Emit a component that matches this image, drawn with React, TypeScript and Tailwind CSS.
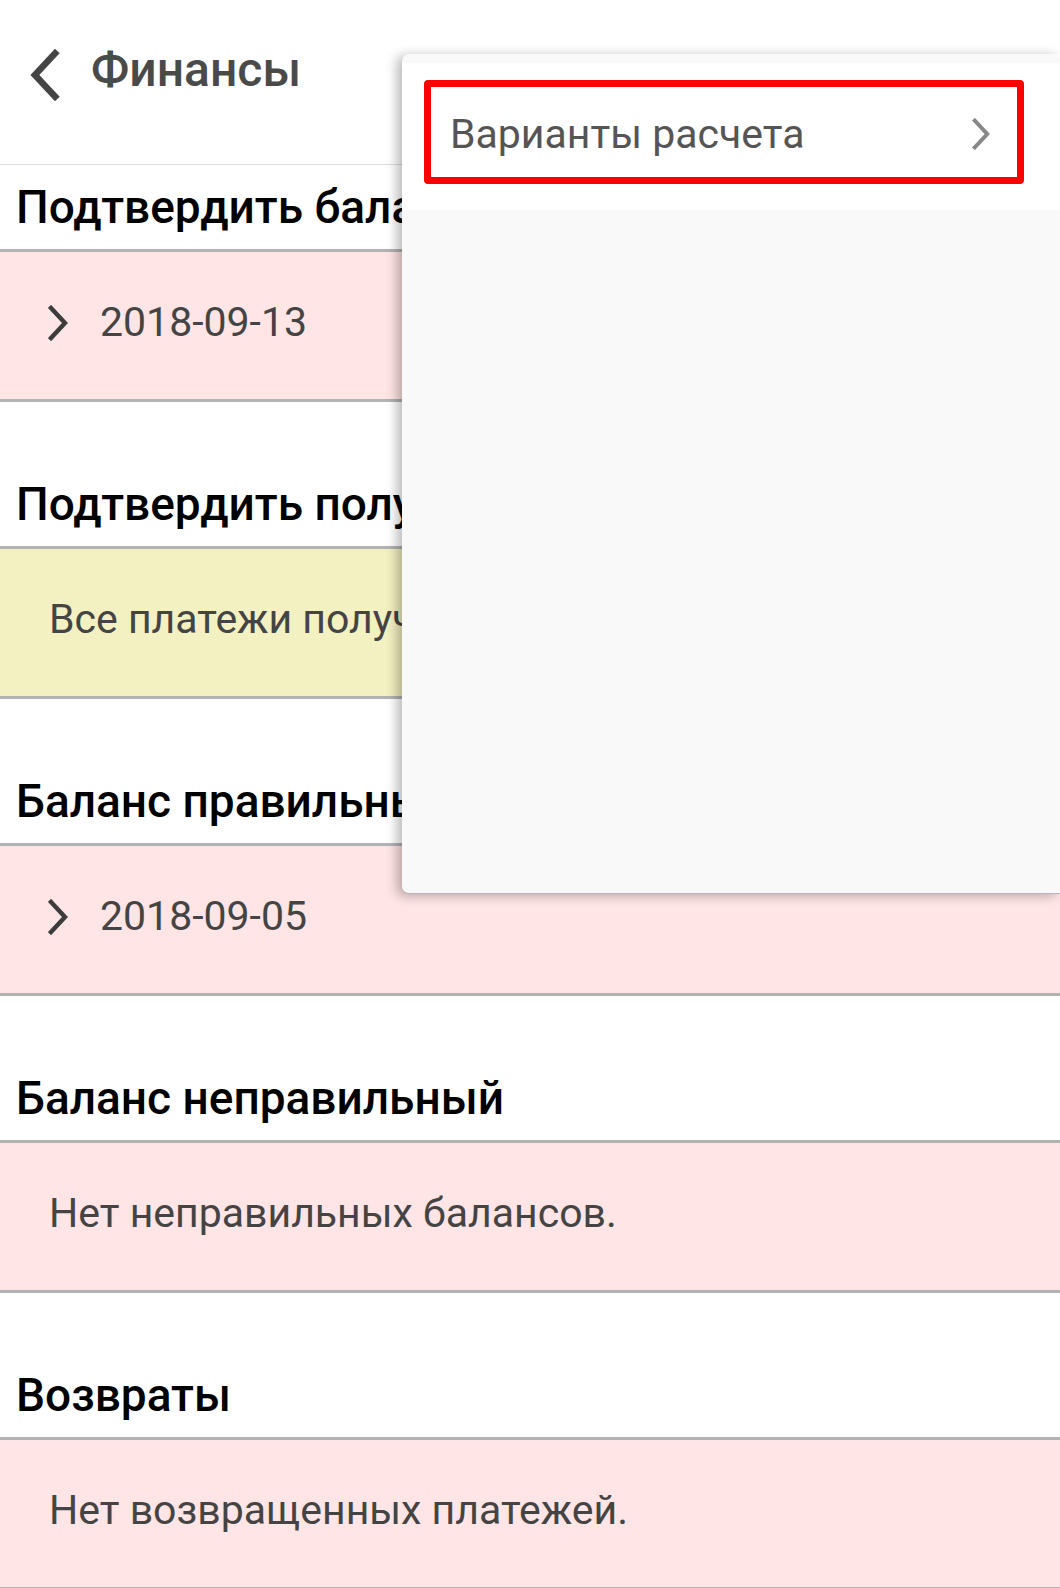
const sections = [
  { title: 'Подтвердить баланс', tone: 'pink', text: '2018-09-13', arrow: true },
  { title: 'Подтвердить получение', tone: 'yellow', text: 'Все платежи получены.', arrow: false },
  { title: 'Баланс правильный', tone: 'pink', text: '2018-09-05', arrow: true },
  { title: 'Баланс неправильный', tone: 'pink', text: 'Нет неправильных балансов.', arrow: false },
  { title: 'Возвраты', tone: 'pink', text: 'Нет возвращенных платежей.', arrow: false },
];

const Chevron = ({ dir, className }: { dir: 'left' | 'right'; className?: string }) => (
  <svg viewBox="0 0 20 36" className={className} fill="none" stroke="currentColor" strokeWidth="4.5" strokeLinecap="square">
    {dir === 'left' ? <polyline points="17,3 3,18 17,33" /> : <polyline points="3,3 17,18 3,33" />}
  </svg>
);

/**
 * 재무 화면 + 옵션 메뉴.
 */
const App = () => {
  return (
    <div className="relative w-[1060px] h-[1588px] overflow-hidden bg-white" style={{ fontFamily: 'Roboto, "Noto Sans", sans-serif' }}>
      {/* 헤더 */}
      <div className="h-[165px] flex items-start pt-[49px] border-b border-[#dedede]">
        <Chevron dir="left" className="w-[32px] h-[52px] ml-[29px] text-[#444]" />
        <span className="ml-[30px] -mt-[7px] text-[48px] leading-[56px] font-medium text-[#4a4a4a]">Финансы</span>
      </div>

      {sections.map((s, i) => (
        <div key={i} className={i === 0 ? '' : 'mt-[60px]'}>
          <div className="h-[84px] flex items-center px-[16px] text-[46px] font-medium text-black whitespace-nowrap">
            {s.title}
          </div>
          <div
            className={`h-[153px] flex items-center pb-[6px] border-y-[3px] border-[#b3b3b3] ${
              s.tone === 'yellow' ? 'bg-[#f3f0c1]' : 'bg-[#ffe5e5]'
            }`}
          >
            {s.arrow ? (
              <div className="flex items-center pl-[48px]">
                <Chevron dir="right" className="w-[20px] h-[36px] text-[#3c3c3c]" />
                <span className="ml-[32px] text-[41px] text-[#444]">{s.text}</span>
              </div>
            ) : (
              <span className="pl-[49px] text-[41px] text-[#444] whitespace-nowrap">{s.text}</span>
            )}
          </div>
        </div>
      ))}

      {/* 옵션 메뉴 */}
      <div className="absolute left-[402px] top-[54px] right-0 h-[840px] rounded-l-[7px] bg-[#f9f9f9] pt-[9px] shadow-[-5px_2px_12px_rgba(0,0,0,0.28)] border-b border-[#bdb3b3]">
        <div className="bg-white h-[147px] pt-[17px] pl-[22px]">
          <div className="w-[600px] h-[104px] border-[7px] border-[#ff0000] rounded-[4px] flex items-center justify-between pl-[19px] pr-[27px]">
            <span className="text-[41px] leading-[50px] mt-[3px] text-[#555]">Варианты расчета</span>
            <Chevron dir="right" className="w-[18px] h-[32px] mt-[3px] text-[#888]" />
          </div>
        </div>
      </div>
    </div>
  );
};

export default App;
